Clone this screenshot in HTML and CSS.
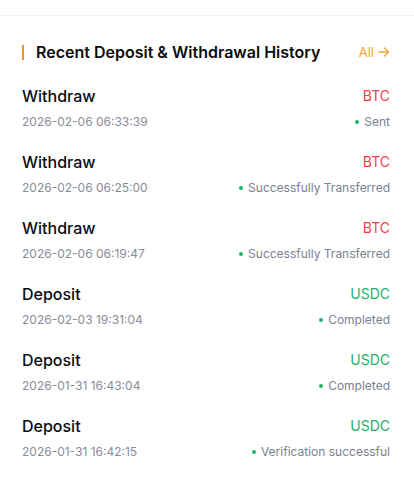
FILE: index.html
```html
<!DOCTYPE html>
<html>
<head>
<meta charset="utf-8">
<link rel="stylesheet" href="styles.css">
</head>
<body>
<div class="topbar"></div>
<section class="history">
  <div class="head">
    <h2 class="title">Recent Deposit &amp; Withdrawal History</h2>
    <a class="all">All
      <svg width="12" height="12" viewBox="0 0 12 12"><path d="M1 6h9.5M6.5 2l4 4-4 4" fill="none" stroke="currentColor" stroke-width="1.4" stroke-linecap="round" stroke-linejoin="round"/></svg>
    </a>
  </div>
  <ul class="list">
    <li class="row">
      <div class="line"><span class="type">Withdraw</span><span class="coin red">BTC</span></div>
      <div class="line sub"><span class="date">2026-02-06 06:33:39</span><span class="status"><i class="dot"></i>Sent</span></div>
    </li>
    <li class="row">
      <div class="line"><span class="type">Withdraw</span><span class="coin red">BTC</span></div>
      <div class="line sub"><span class="date">2026-02-06 06:25:00</span><span class="status"><i class="dot"></i>Successfully Transferred</span></div>
    </li>
    <li class="row">
      <div class="line"><span class="type">Withdraw</span><span class="coin red">BTC</span></div>
      <div class="line sub"><span class="date">2026-02-06 06:19:47</span><span class="status"><i class="dot"></i>Successfully Transferred</span></div>
    </li>
    <li class="row">
      <div class="line"><span class="type">Deposit</span><span class="coin green">USDC</span></div>
      <div class="line sub"><span class="date">2026-02-03 19:31:04</span><span class="status"><i class="dot"></i>Completed</span></div>
    </li>
    <li class="row">
      <div class="line"><span class="type">Deposit</span><span class="coin green">USDC</span></div>
      <div class="line sub"><span class="date">2026-01-31 16:43:04</span><span class="status"><i class="dot"></i>Completed</span></div>
    </li>
    <li class="row">
      <div class="line"><span class="type">Deposit</span><span class="coin green">USDC</span></div>
      <div class="line sub"><span class="date">2026-01-31 16:42:15</span><span class="status"><i class="dot"></i>Verification successful</span></div>
    </li>
  </ul>
</section>
</body>
</html>
```
FILE: styles.css
```css
* { box-sizing: border-box; }
html, body { margin: 0; padding: 0; background: #fff; }
body { font-family: Inter, "Noto Sans", sans-serif; color: #0b0b0f; }
.topbar { height: 16px; border-bottom: 1px solid #efefef; }
.history { padding: 24px 24px 0 22px; }
.head { display: flex; align-items: center; justify-content: space-between; height: 24px; }
.title { margin: 0; font-size: 16px; font-weight: 600; line-height: 24px; border-left: 2px solid #f7931a; padding-left: 12px; height: 15px; display: flex; align-items: center; }
.all { display: flex; align-items: center; gap: 4px; color: #f7a234; font-size: 13px; text-decoration: none; }
.list { list-style: none; margin: 8px 0 0; padding: 0; }
.row { padding: 13px 0 7px; }
.line { display: flex; justify-content: space-between; align-items: center; }
.sub { margin-top: 6px; }
.type { font-size: 16px; font-weight: 500; line-height: 22px; }
.coin { font-size: 14px; line-height: 22px; }
.red { color: #f0424e; }
.green { color: #1fb16a; }
.date { font-size: 12px; line-height: 18px; color: #878c96; }
.status { font-size: 12px; line-height: 18px; color: #7a8190; display: flex; align-items: center; }
.dot { width: 4px; height: 4px; border-radius: 50%; background: #1fb16a; margin-right: 5px; }
```
